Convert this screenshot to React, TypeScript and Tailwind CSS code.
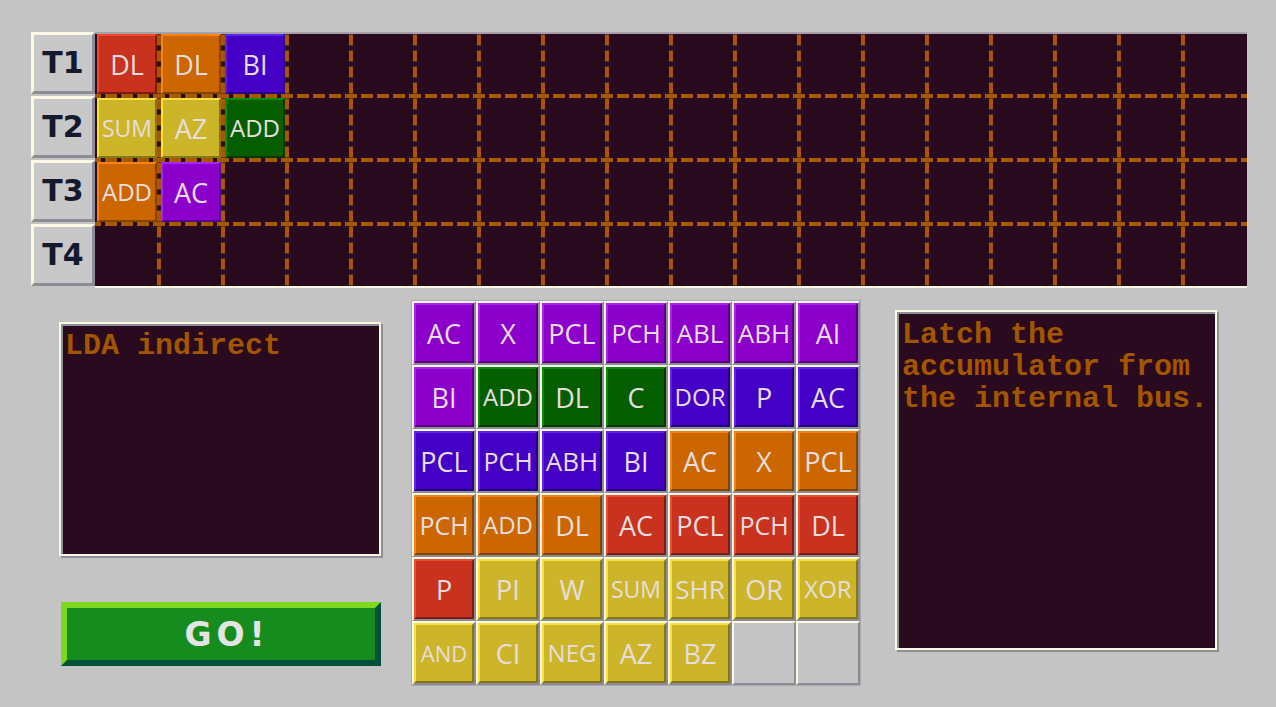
import React from "react";

type Tone = "red" | "orange" | "yellow" | "green" | "purple" | "indigo";
type Chip = [string, Tone];

const TONES: Record<Tone, string> = {
  red: "bg-[#c8321e] border-t-[#ee4a2c] border-l-[#ee4a2c] border-b-[#7a1c10] border-r-[#7a1c10]",
  orange: "bg-[#cc6600] border-t-[#fb8212] border-l-[#fb8212] border-b-[#864200] border-r-[#864200]",
  yellow: "bg-[#cdb52a] border-t-[#fbe238] border-l-[#fbe238] border-b-[#877616] border-r-[#877616]",
  green: "bg-[#045e00] border-t-[#0c8a0c] border-l-[#0c8a0c] border-b-[#023800] border-r-[#023800]",
  purple: "bg-[#8c00cc] border-t-[#ac22f4] border-l-[#ac22f4] border-b-[#5a0086] border-r-[#5a0086]",
  indigo: "bg-[#4400c4] border-t-[#6222ee] border-l-[#6222ee] border-b-[#2a007e] border-r-[#2a007e]",
};

// labels that need a smaller size to fit inside the 60px tile
const SIZES: Record<string, string> = {
  SUM: "text-[23px]",
  AND: "text-[22px]",
  ADD: "text-[24px]",
  DOR: "text-[24px]",
  XOR: "text-[24px]",
  NEG: "text-[24px]",
  PCH: "text-[25px]",
  ABH: "text-[26px]",
  ABL: "text-[26px]",
  SHR: "text-[26px]",
};

const TIMELINE: Chip[][] = [
  [["DL", "red"], ["DL", "orange"], ["BI", "indigo"]],
  [["SUM", "yellow"], ["AZ", "yellow"], ["ADD", "green"]],
  [["ADD", "orange"], ["AC", "purple"]],
  [],
];

const PALETTE: (Chip | null)[][] = [
  [["AC", "purple"], ["X", "purple"], ["PCL", "purple"], ["PCH", "purple"], ["ABL", "purple"], ["ABH", "purple"], ["AI", "purple"]],
  [["BI", "purple"], ["ADD", "green"], ["DL", "green"], ["C", "green"], ["DOR", "indigo"], ["P", "indigo"], ["AC", "indigo"]],
  [["PCL", "indigo"], ["PCH", "indigo"], ["ABH", "indigo"], ["BI", "indigo"], ["AC", "orange"], ["X", "orange"], ["PCL", "orange"]],
  [["PCH", "orange"], ["ADD", "orange"], ["DL", "orange"], ["AC", "red"], ["PCL", "red"], ["PCH", "red"], ["DL", "red"]],
  [["P", "red"], ["PI", "yellow"], ["W", "yellow"], ["SUM", "yellow"], ["SHR", "yellow"], ["OR", "yellow"], ["XOR", "yellow"]],
  [["AND", "yellow"], ["CI", "yellow"], ["NEG", "yellow"], ["AZ", "yellow"], ["BZ", "yellow"], null, null],
];

const COLS = 18;
const DASH = "#a55a02";

const Tile: React.FC<{ chip: Chip }> = ({ chip: [label, tone] }) => (
  <div
    className={`flex h-[60px] w-[60px] items-center justify-center border-2 font-['Open_Sans',sans-serif] leading-none text-[#e6dede] ${TONES[tone]} ${SIZES[label] ?? "text-[27px]"}`}
  >
    {label}
  </div>
);

const TimelineGrid: React.FC = () => (
  <div className="relative h-[256px] w-[1152px] bg-[#290a1f]">
    <svg className="absolute inset-0" width={1152} height={256}>
      {[64, 128, 192].map((y) => (
        <line
          key={`h${y}`}
          x1={0}
          x2={1152}
          y1={y}
          y2={y}
          stroke={DASH}
          strokeWidth={4}
          strokeDasharray="12 4"
          strokeDashoffset={6}
        />
      ))}
      {Array.from({ length: COLS - 1 }, (_, i) => (i + 1) * 64).map((x) => (
        <line
          key={`v${x}`}
          x1={x}
          x2={x}
          y1={0}
          y2={256}
          stroke={DASH}
          strokeWidth={4}
          strokeDasharray="11 5"
          strokeDashoffset={13.5}
        />
      ))}
    </svg>
    <div className="relative flex flex-col">
      {TIMELINE.map((row, r) => (
        <div key={r} className="flex h-[64px]">
          {Array.from({ length: COLS }, (_, c) => (
            <div key={c} className="h-[64px] w-[64px] pl-[2px] pt-[2px]">
              {row[c] && <Tile chip={row[c]} />}
            </div>
          ))}
        </div>
      ))}
    </div>
    <div className="absolute left-0 right-0 top-0 h-[2px] bg-[#a2a2a8]" />
    <div className="absolute bottom-0 left-0 right-0 h-[2px] bg-[#fbf8e4]" />
  </div>
);

const Screen: React.FC<{ className: string; children?: React.ReactNode }> = ({
  className,
  children,
}) => (
  <div
    className={`border-2 border-[#fbf8e4] bg-[#290a1f] font-['Liberation_Mono',monospace] text-[30px] font-bold leading-[32px] text-[#a35600] shadow-[2px_2px_0_#8e8e96,inset_2px_2px_0_#8e8e96] ${className}`}
  >
    {children}
  </div>
);

export default function App() {
  return (
    <div className="h-[707px] w-[1276px] overflow-hidden bg-[#c4c4c4] pl-[31px] pt-[32px]">
      <div className="flex">
        <div className="flex w-[64px] flex-col">
          {TIMELINE.map((_, i) => (
            <div
              key={i}
              className="mb-[2px] flex h-[62px] items-center justify-center border-[3px] border-b-[#8c8c94] border-l-[#fbf8e4] border-r-[#8c8c94] border-t-[#fbf8e4] bg-[#c8c8c8] font-['DejaVu_Sans',sans-serif] text-[30px] font-bold leading-none text-[#141a2e]"
            >
              T{i + 1}
            </div>
          ))}
        </div>
        <TimelineGrid />
      </div>

      <div className="mt-[12px] flex items-start">
        <div className="ml-[28px] mt-[22px] flex w-[322px] flex-col">
          <Screen className="h-[234px] pl-[4px] pt-[6px]">LDA indirect</Screen>
          <button className="ml-[2px] mt-[46px] flex h-[64px] w-[320px] items-center justify-center border-[6px] border-b-[#01503c] border-l-[#7ed81e] border-r-[#01503c] border-t-[#7ed81e] bg-[#178c1e] pl-[12px] font-['DejaVu_Sans',sans-serif] text-[33px] font-bold leading-none tracking-[5px] text-[#e4e4e4]">
            GO!
          </button>
        </div>

        <div className="ml-[30px] border border-[#a8a8ae] bg-[#c4c4c4]">
          {PALETTE.map((row, r) => (
            <div key={r} className="flex">
              {row.map((chip, c) => (
                <div
                  key={c}
                  className="h-[64px] w-[64px] border-2 border-b-[#8c8c94] border-l-[#fbf8e6] border-r-[#8c8c94] border-t-[#fbf8e6]"
                >
                  {chip && <Tile chip={chip} />}
                </div>
              ))}
            </div>
          ))}
        </div>

        <Screen className="ml-[34px] mt-[10px] h-[340px] w-[322px] pl-[5px] pr-[2px] pt-[7px]">
          Latch the accumulator from the internal bus.
        </Screen>
      </div>
    </div>
  );
}
